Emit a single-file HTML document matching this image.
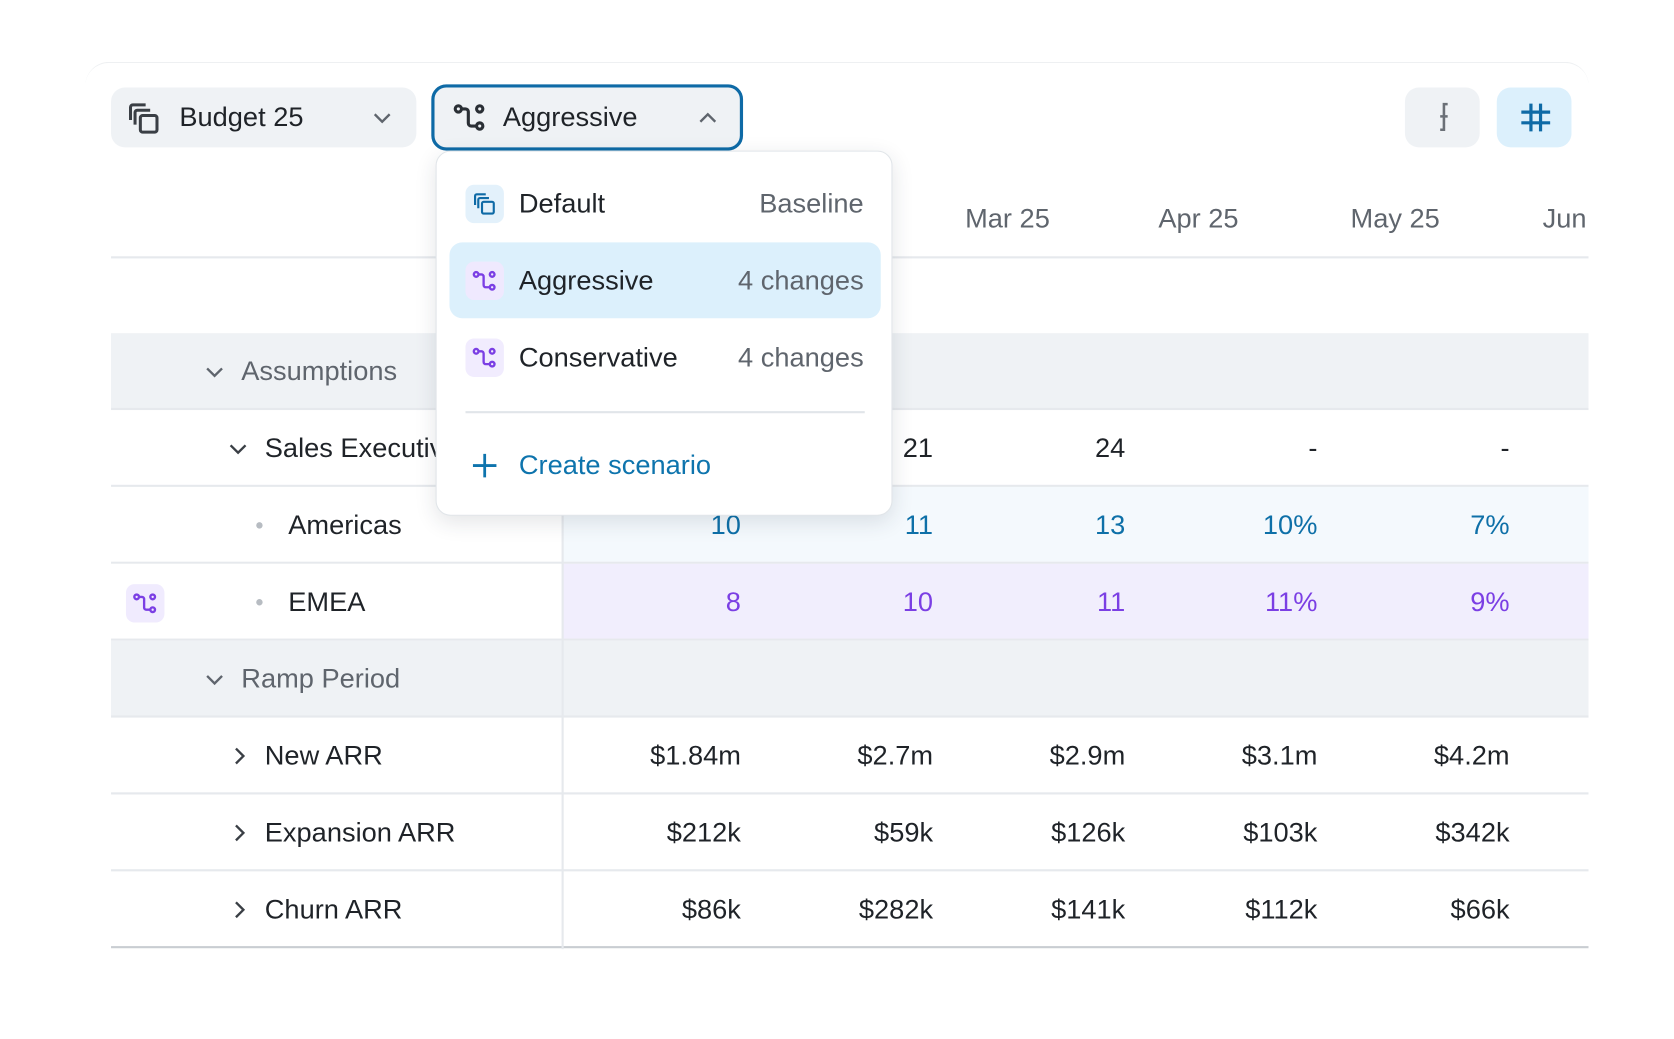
<!DOCTYPE html>
<html><head><meta charset="utf-8"><style>
html,body{margin:0;padding:0;background:#fff;width:1674px;height:1039px;overflow:hidden}
#w{position:absolute;left:0;top:0;width:1568px;height:973px;transform:scale(1.06760,1.06783);transform-origin:0 0;font-family:"Liberation Sans",sans-serif;font-size:25.5px;color:#1f2328}
.a{position:absolute}
.card{left:80px;top:58px;width:1408px;height:830px;border-top-left-radius:22px;border-top-right-radius:22px;border-top:1px solid #eef0f2;overflow:hidden;background:#fff}
.btn{background:#eff2f5;border-radius:13px}
.row{position:absolute;left:24px;width:1384px;height:72px;border-bottom:2px solid #e6e9ed;box-sizing:border-box}
.t{position:absolute;top:0;line-height:72px;white-space:nowrap}
.v{position:absolute;top:0;line-height:72px;text-align:right;width:160px}
.g{color:#5f656d}
.chev{position:absolute;top:29px}
.dot{position:absolute;width:6px;height:6px;border-radius:3px;background:#b7bcc2;top:33px}
</style></head><body><div id="w">
<div class="a card">
  <div class="row" style="top:181px;height:0;border-bottom:2px solid #e6e9ed"></div>
  <div class="t g" style="left:824px;top:110px;line-height:72px">Mar 25</div>
  <div class="t g" style="left:1005px;top:110px;line-height:72px">Apr 25</div>
  <div class="t g" style="left:1185px;top:110px;line-height:72px">May 25</div>
  <div class="t g" style="left:1365px;top:110px;line-height:72px">Jun 25</div>

  <div class="row" style="top:253px;background:#eff2f5">
    <svg class="chev" style="left:87px" width="20" height="14" viewBox="0 0 20 14"><path d="M3 4l7 7 7-7" fill="none" stroke="#5f656d" stroke-width="2.2"/></svg>
    <div class="t g" style="left:122px">Assumptions</div>
  </div>
  <div class="row" style="top:325px">
    <svg class="chev" style="left:109px" width="20" height="14" viewBox="0 0 20 14"><path d="M3 4l7 7 7-7" fill="none" stroke="#3a3f45" stroke-width="2.2"/></svg>
    <div class="t" style="left:144px">Sales Executives</div>
    <div class="v" style="left:430px">18</div><div class="v" style="left:610px">21</div><div class="v" style="left:790px">24</div><div class="v" style="left:970px">-</div><div class="v" style="left:1150px">-</div>
  </div>
  <div class="row" style="top:397px;background:linear-gradient(90deg,#fff 423px,#f4f9fd 423px)">
    <div class="dot" style="left:136px"></div>
    <div class="t" style="left:166px">Americas</div>
    <div style="color:#0e70a8"><div class="v" style="left:430px">10</div><div class="v" style="left:610px">11</div><div class="v" style="left:790px">13</div><div class="v" style="left:970px">10%</div><div class="v" style="left:1150px">7%</div></div>
  </div>
  <div class="row" style="top:469px;background:linear-gradient(90deg,#fff 423px,#f1eefd 423px)">
    <div class="a" style="left:14px;top:19px;width:36px;height:36px;border-radius:8px;background:#f0ebfe">
      <svg width="36" height="36" viewBox="-6 -6 36 36"><g fill="none" stroke="#7b3fe4" stroke-width="2.2"><circle cx="4" cy="6" r="2.2"/><circle cx="19" cy="6" r="2.2"/><circle cx="19" cy="18" r="2.2"/><path d="M6.2 6H9a2 2 0 0 1 2 2v8a2 2 0 0 0 2 2h3.8"/></g></svg>
    </div>
    <div class="dot" style="left:136px"></div>
    <div class="t" style="left:166px">EMEA</div>
    <div style="color:#7b3fe4"><div class="v" style="left:430px">8</div><div class="v" style="left:610px">10</div><div class="v" style="left:790px">11</div><div class="v" style="left:970px">11%</div><div class="v" style="left:1150px">9%</div></div>
  </div>
  <div class="row" style="top:541px;background:#eff2f5">
    <svg class="chev" style="left:87px" width="20" height="14" viewBox="0 0 20 14"><path d="M3 4l7 7 7-7" fill="none" stroke="#5f656d" stroke-width="2.2"/></svg>
    <div class="t g" style="left:122px">Ramp Period</div>
  </div>
  <div class="row" style="top:613px">
    <svg class="chev" style="left:113px;top:26px" width="14" height="20" viewBox="0 0 14 20"><path d="M4 3l7 7-7 7" fill="none" stroke="#3a3f45" stroke-width="2.2"/></svg>
    <div class="t" style="left:144px">New ARR</div>
    <div class="v" style="left:430px">$1.84m</div><div class="v" style="left:610px">$2.7m</div><div class="v" style="left:790px">$2.9m</div><div class="v" style="left:970px">$3.1m</div><div class="v" style="left:1150px">$4.2m</div>
  </div>
  <div class="row" style="top:685px">
    <svg class="chev" style="left:113px;top:26px" width="14" height="20" viewBox="0 0 14 20"><path d="M4 3l7 7-7 7" fill="none" stroke="#3a3f45" stroke-width="2.2"/></svg>
    <div class="t" style="left:144px">Expansion ARR</div>
    <div class="v" style="left:430px">$212k</div><div class="v" style="left:610px">$59k</div><div class="v" style="left:790px">$126k</div><div class="v" style="left:970px">$103k</div><div class="v" style="left:1150px">$342k</div>
  </div>
  <div class="row" style="top:757px;border-bottom:2px solid #c9cdd2">
    <svg class="chev" style="left:113px;top:26px" width="14" height="20" viewBox="0 0 14 20"><path d="M4 3l7 7-7 7" fill="none" stroke="#3a3f45" stroke-width="2.2"/></svg>
    <div class="t" style="left:144px">Churn ARR</div>
    <div class="v" style="left:430px">$86k</div><div class="v" style="left:610px">$282k</div><div class="v" style="left:790px">$141k</div><div class="v" style="left:970px">$112k</div><div class="v" style="left:1150px">$66k</div>
  </div>
  <div class="a" style="left:446px;top:397px;width:2px;height:433px;background:#e6e9ed"></div>
</div>

<div class="a btn" style="left:104px;top:82px;width:286px;height:56px">
  <svg class="a" style="left:14px;top:12px" width="34" height="34" viewBox="0 0 24 24"><g fill="none" stroke="#3a3f45" stroke-width="2"><path d="M3 13V4.5A1.5 1.5 0 0 1 4.5 3H13"/><path d="M6 16V8a1.5 1.5 0 0 1 1.5-1.5H16"/><rect x="9.5" y="10" width="11" height="11" rx="1.5"/></g></svg>
  <div class="a" style="left:64px;top:0;line-height:56px">Budget 25</div>
  <svg class="a" style="left:244px;top:21px" width="20" height="14" viewBox="0 0 20 14"><path d="M3 4l7 7 7-7" fill="none" stroke="#5f656d" stroke-width="2.2"/></svg>
</div>
<div class="a" style="left:404px;top:79px;width:286px;height:56px;border:3px solid #0e6aa6;border-radius:14px;background:#eff2f5">
  <svg class="a" style="left:16px;top:12px" width="34" height="32" viewBox="0 0 24 24"><g fill="none" stroke="#2a2f35" stroke-width="2.2"><circle cx="4" cy="6" r="2.2"/><circle cx="19" cy="6" r="2.2"/><circle cx="19" cy="18" r="2.2"/><path d="M6.2 6H9a2 2 0 0 1 2 2v8a2 2 0 0 0 2 2h3.8"/></g></svg>
  <div class="a" style="left:64px;top:0;line-height:56px">Aggressive</div>
  <svg class="a" style="left:246px;top:21px" width="20" height="14" viewBox="0 0 20 14"><path d="M3 11l7-7 7 7" fill="none" stroke="#5f656d" stroke-width="2.2"/></svg>
</div>
<div class="a btn" style="left:1316px;top:82px;width:70px;height:56px">
  <svg class="a" style="left:23px;top:12px" width="24" height="32" viewBox="0 0 24 32"><g fill="none" stroke="#6b7077" stroke-width="2.4"><path d="M17 3.5h-3.5v24h-3.5"/><path d="M10 15h7"/></g></svg>
</div>
<div class="a" style="left:1402px;top:82px;width:70px;height:56px;border-radius:13px;background:#dcf0fc">
  <svg class="a" style="left:21px;top:13px" width="30" height="30" viewBox="0 0 30 30"><g fill="none" stroke="#0e6aa6" stroke-width="3"><path d="M11 2v26M20 2v26M2 10h27M2 20h27"/></g></svg>
</div>

<div class="a" style="left:408px;top:141px;width:428px;height:342px;background:#fff;border:1px solid #e1e5e9;border-radius:14px;box-shadow:0 6px 20px rgba(30,40,60,.12);box-sizing:border-box">
  <div class="a" style="left:27px;top:31px;width:36px;height:36px;border-radius:8px;background:#e3f1fb">
    <svg width="36" height="36" viewBox="-6 -6 36 36"><g fill="none" stroke="#0e6aa6" stroke-width="2"><path d="M3 13V4.5A1.5 1.5 0 0 1 4.5 3H13"/><path d="M6 16V8a1.5 1.5 0 0 1 1.5-1.5H16"/><rect x="9.5" y="10" width="11" height="11" rx="1.5"/></g></svg>
  </div>
  <div class="a" style="left:77px;top:24px;line-height:50px">Default</div>
  <div class="a g" style="right:26px;top:24px;line-height:50px">Baseline</div>
  <div class="a" style="left:12px;top:85px;width:404px;height:71px;border-radius:12px;background:#dcf0fc"></div>
  <div class="a" style="left:27px;top:103px;width:36px;height:36px;border-radius:8px;background:#efe9fe">
    <svg width="36" height="36" viewBox="-6 -6 36 36"><g fill="none" stroke="#7b3fe4" stroke-width="2.2"><circle cx="4" cy="6" r="2.2"/><circle cx="19" cy="6" r="2.2"/><circle cx="19" cy="18" r="2.2"/><path d="M6.2 6H9a2 2 0 0 1 2 2v8a2 2 0 0 0 2 2h3.8"/></g></svg>
  </div>
  <div class="a" style="left:77px;top:96px;line-height:50px">Aggressive</div>
  <div class="a g" style="right:26px;top:96px;line-height:50px">4 changes</div>
  <div class="a" style="left:27px;top:175px;width:36px;height:36px;border-radius:8px;background:#f1ecfe">
    <svg width="36" height="36" viewBox="-6 -6 36 36"><g fill="none" stroke="#7b3fe4" stroke-width="2.2"><circle cx="4" cy="6" r="2.2"/><circle cx="19" cy="6" r="2.2"/><circle cx="19" cy="18" r="2.2"/><path d="M6.2 6H9a2 2 0 0 1 2 2v8a2 2 0 0 0 2 2h3.8"/></g></svg>
  </div>
  <div class="a" style="left:77px;top:168px;line-height:50px">Conservative</div>
  <div class="a g" style="right:26px;top:168px;line-height:50px">4 changes</div>
  <div class="a" style="left:27px;top:243px;width:374px;height:2px;background:#e1e5e9"></div>
  <svg class="a" style="left:32px;top:281px" width="26" height="26" viewBox="0 0 26 26"><path d="M13 2v22M2 13h22" stroke="#0e74ad" stroke-width="2.6"/></svg>
  <div class="a" style="left:77px;top:269px;line-height:50px;color:#0e74ad">Create scenario</div>
</div>
</div></body></html>
